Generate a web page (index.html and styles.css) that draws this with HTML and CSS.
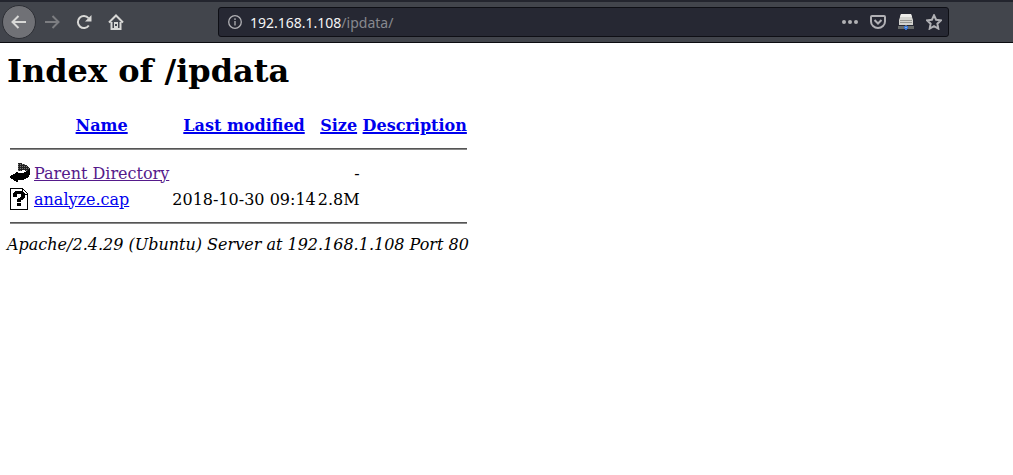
FILE: index.html
```
<!DOCTYPE html>
<html lang="en">
<head>
<meta charset="utf-8">
<title>Index of /ipdata</title>
<link rel="stylesheet" href="styles.css">
</head>
<body>
<header class="toolbar">
  <nav class="nav-buttons" aria-label="Browser navigation">
    <button class="nav-button back" type="button" aria-label="Back">
      <svg width="16" height="16" viewBox="0 0 16 16"><path d="M15 8H1.5M7.5 2 1.5 8l6 6"/></svg>
    </button>
    <button class="nav-button forward" type="button" aria-label="Forward" disabled>
      <svg width="16" height="16" viewBox="0 0 16 16"><path d="M1 8h13.5M8.500 2l6 6-6 6"/></svg>
    </button>
    <button class="nav-button" type="button" aria-label="Reload">
      <svg width="16" height="16" viewBox="0 0 16 16"><path d="M12.800 11.500A6 6 0 1 1 12.500 4.200"/><path class="solid" d="M15.500 1v6.500H9z"/></svg>
    </button>
    <button class="nav-button" type="button" aria-label="Home">
      <svg width="16" height="16" viewBox="0 0 16 16"><path d="M1 8.500 8 1.500l7 7M3.500 8v7h9V8"/><path class="solid" d="M6 8h4v7H6z"/><path class="knob" d="M8 10v2"/></svg>
    </button>
  </nav>
  <div class="address-bar">
    <svg class="info" width="14" height="14" viewBox="0 0 14 14"><circle cx="7" cy="7" r="6.300"/><path d="M7 6v4.500M7 3.300v1.600"/></svg>
    <div class="url"><span class="host">192.168.1.108</span>/ipdata/</div>
    <div class="actions">
      <button class="action" type="button" aria-label="Page actions">
        <svg width="16" height="16" viewBox="0 0 16 16"><g class="dots"><circle cx="2" cy="8" r="2"/><circle cx="8" cy="8" r="2"/><circle cx="14" cy="8" r="2"/></g></svg>
      </button>
      <button class="action" type="button" aria-label="Save to Pocket">
        <svg width="16" height="16" viewBox="0 0 16 16"><path d="M2 2h12q1 0 1 1v4.500a7 6.500 0 0 1-14 0V3q0-1 1-1zM4.500 6 8 9.500 11.500 6"/></svg>
      </button>
      <button class="action" type="button" aria-label="Network drive">
        <svg width="16" height="16" viewBox="0 0 16 16"><g class="drive"><path fill="#d3d3cf" d="M3 0h10l2 6v5H1V6z"/><path fill="#ededea" d="M3 0h10l1 3H2z"/><path fill="#969792" d="M2 6h12v1H2zM2 8h12v1H2z"/><path fill="#686b6a" d="M0 12h16v3H0zM7 11h2v1H7z"/><path fill="#3976d2" d="M6 12h4v3H9v1H7v-1H6z"/><path fill="#83adf0" d="M7 13h2v1H7z"/></g></svg>
      </button>
      <button class="action" type="button" aria-label="Bookmark">
        <svg width="16" height="16" viewBox="0 0 16 16"><path d="M8 1.300l2.100 4.400 4.900.6-3.600 3.400.9 4.900L8 12.200l-4.300 2.400.9-4.900L1 6.300l4.900-.6z"/></svg>
      </button>
    </div>
  </div>
</header>
<main class="page">
  <h1 class="title">Index of /ipdata</h1>
  <table class="listing">
    <thead>
      <tr class="headings">
        <td></td>
        <th><a href="#name">Name</a></th>
        <th><a href="#modified">Last modified</a></th>
        <th class="size-heading"><a href="#size">Size</a></th>
        <th><a href="#description">Description</a></th>
      </tr>
      <tr><td colspan="5"><hr class="rule"></td></tr>
    </thead>
    <tbody>
      <tr>
        <td><svg class="file-icon" width="20" height="22" viewBox="0 0 20 22" role="img" aria-label="Parent directory">
          <defs><pattern id="dither" width="2" height="2" patternUnits="userSpaceOnUse"><path fill="#222" d="M0 0h2v2H0z"/><path fill="#777" d="M0 0h1v1H0z"/></pattern></defs>
          <path fill="url(#dither)" d="M8 1h4v1h3v1h2v1h1v1h1v1h1v3h-5V8h-3v1H8z"/>
          <path d="M20 7v6h-1v2h-1v1h-2v1h-2v1H8v2H6v-1H4v-1H3v-1H1v-1H0v-2h1v-1h2v-1h2v-1h1v-1h2v1h6v-1h2V9h2V8h1V7z"/>
        </svg></td>
        <td><a class="visited" href="#parent">Parent Directory</a></td>
        <td class="date"></td>
        <td class="size">-</td>
        <td></td>
      </tr>
      <tr>
        <td><svg class="file-icon" width="20" height="22" viewBox="0 0 20 22" role="img" aria-label="Unknown file type">
          <path fill-rule="evenodd" d="M0 0h13v1h1v1h1v1h1v1h1v1h1v17H0zM1 1v20h16V7h-5V1z"/>
          <path fill="#fff" d="M13 2h1v1h1v1h1v1h1v1h-4z"/>
          <path d="M3 5h1V4h1V3h8v1h1v1h1v5h-1v1h-1v1h-2v2H7v-3h1v-1h2V9h1V6H7v3H3zM7 15h4v3H7z"/>
        </svg></td>
        <td><a href="#analyze">analyze.cap</a></td>
        <td class="date">2018-10-30 09:14</td>
        <td class="size">2.8M</td>
        <td></td>
      </tr>
      <tr><td colspan="5"><hr class="rule"></td></tr>
    </tbody>
  </table>
  <address class="server">Apache/2.4.29 (Ubuntu) Server at 192.168.1.108 Port 80</address>
</main>
</body>
</html>
```

FILE: styles.css
```
* {
  box-sizing: border-box;
}

body {
  margin: 0;
  background: #fff;
  color: #000;
  font: 16px "DejaVu Serif", serif;
}

.toolbar {
  display: grid;
  grid-template-columns: 218fr 731fr 64fr;
  align-items: center;
  height: 43px;
  border-top: 2px solid #23252e;
  border-bottom: 1px solid #0b0b10;
  background: #42454c;
}

.nav-buttons {
  display: flex;
  align-items: center;
  padding-left: 2px;
}

.nav-button,
.action {
  display: flex;
  align-items: center;
  justify-content: center;
  padding: 0;
  border: 0;
  background: none;
}

.nav-button {
  width: 32px;
  height: 32px;
  color: #d8d8d6;
}

.back {
  width: 34px;
  height: 34px;
  border: 1px solid #2d2f35;
  border-radius: 50%;
  background: #707176;
}

.forward {
  color: #7c7d81;
}

.toolbar svg {
  flex: none;
  fill: none;
  stroke: currentColor;
  stroke-width: 2;
}

.toolbar svg .solid {
  fill: currentColor;
  stroke: none;
}

.toolbar svg .knob {
  stroke: #42454c;
}

.toolbar svg .drive {
  stroke: none;
}

.toolbar svg .dots {
  fill: currentColor;
  stroke: none;
}

.address-bar {
  display: flex;
  align-items: center;
  height: 30px;
  padding: 0 6px 0 9px;
  border: 1px solid #0e0f15;
  border-radius: 3px;
  background: #262833;
  color: #b1b1b5;
}

.toolbar .info {
  stroke-width: 1.300;
}

.url {
  flex: 1;
  padding-left: 8px;
  color: #87888f;
  font: 14px "Noto Sans", sans-serif;
}

.host {
  color: #f4f4f5;
}

.actions {
  display: flex;
  gap: 12px;
}

.action {
  color: #b1b1b5;
}

.page {
  padding: 9px 7px;
}

.title {
  margin: 0 0 21px;
  font-size: 32px;
}

.listing {
  border-spacing: 2px;
}

.listing th,
.listing td {
  padding: 1px;
}

.listing .date {
  padding: 1px 0;
}

.listing .size,
.listing .size-heading {
  padding: 1px 0;
}

.headings {
  height: 24px;
}

.headings a {
  text-decoration-thickness: 2px;
}

.rule {
  margin: 8px 0;
  border: 0;
  border-top: 1px solid #555;
  border-bottom: 1px solid #888;
}

.file-icon {
  display: block;
}

.size {
  text-align: right;
}

a {
  color: #00e;
}

.visited {
  color: #551a8b;
}

.server {
  font-style: italic;
}
```
